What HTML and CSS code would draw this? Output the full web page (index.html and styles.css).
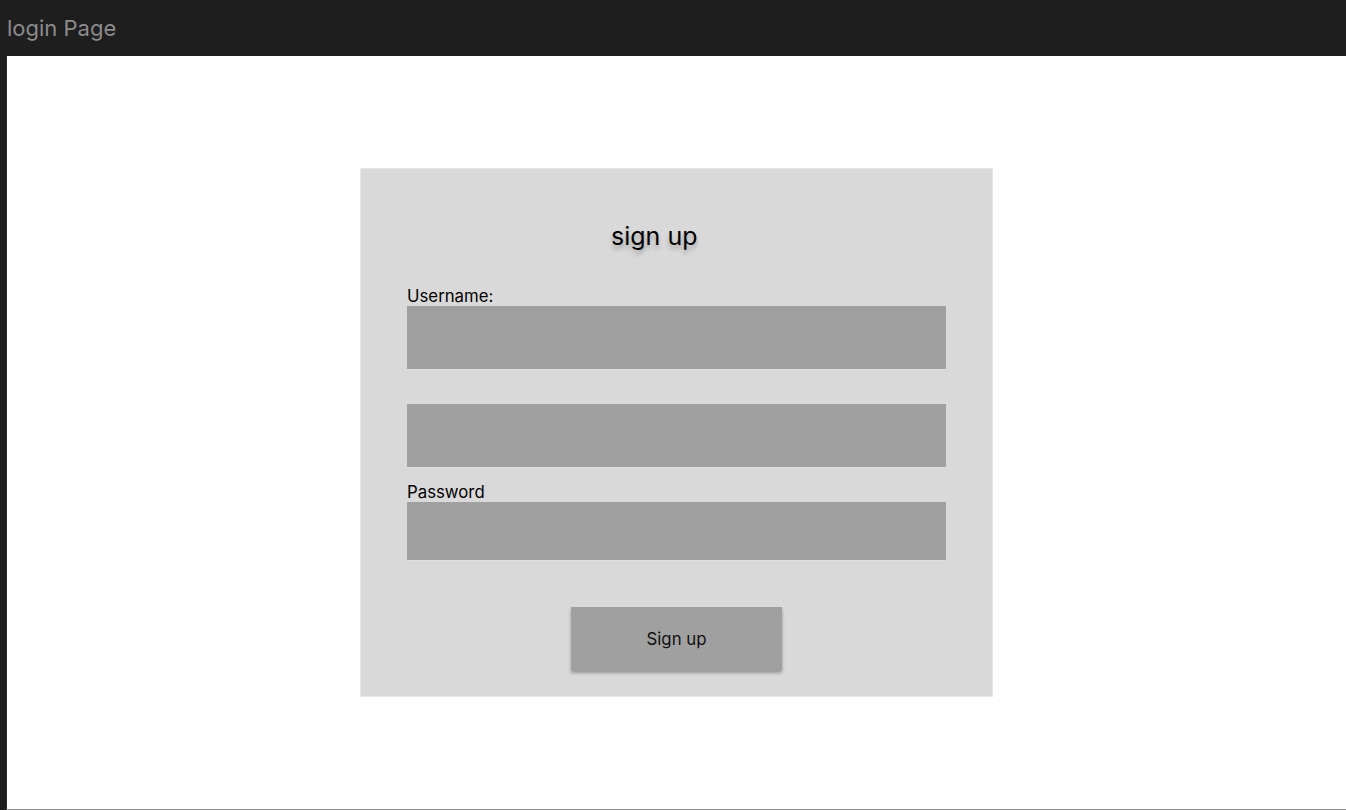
FILE: index.html
```html
<!DOCTYPE html>
<html lang="en">
<head>
<meta charset="utf-8">
<title>login Page</title>
<link rel="stylesheet" href="styles.css">
</head>
<body>
  <header class="topbar">login Page</header>
  <main class="frame">
    <form class="card">
      <h1 class="card-title">sign up</h1>
      <div class="fields">
        <label class="label" for="username">Username:</label>
        <input class="field" id="username" type="text">
        <input class="field field-second" type="text">
        <label class="label label-password" for="password">Password</label>
        <input class="field field-short" id="password" type="password">
      </div>
      <button class="btn" type="button">Sign up</button>
    </form>
  </main>
</body>
</html>
```

FILE: styles.css
```css
* { box-sizing: border-box; }

html, body {
  margin: 0;
  padding: 0;
}

body {
  background: #1e1e1e;
  font-family: Inter, "Noto Sans", sans-serif;
  width: 1346px;
  height: 810px;
  overflow: hidden;
}

.topbar {
  height: 56px;
  padding-left: 7px;
  padding-top: 15px;
  font-size: 22px;
  line-height: 27px;
  color: #8c8c8c;
}

.frame {
  margin-left: 6px;
  border-left: 1px solid #2e2e2e;
  background: #ffffff;
  height: 754px;
  border-bottom: 1px solid #8c8c8c;
  display: flex;
  align-items: center;
  justify-content: center;
}

.card {
  width: 631px;
  height: 527px;
  background: #d9d9d9;
  box-shadow: 0 0 0 1px #e6e6e6;
  margin: 0;
  padding: 52px 46px 26px;
  display: flex;
  flex-direction: column;
  align-items: center;
}

.card-title {
  align-self: flex-start;
  margin: 0 0 0 204px;
  font-weight: 400;
  font-size: 25px;
  line-height: 30px;
  color: #000;
  text-shadow: 0 4px 4px rgba(0, 0, 0, 0.25);
}

.fields {
  width: 100%;
  display: flex;
  flex-direction: column;
  margin-top: 36px;
}

.label {
  font-size: 16.8px;
  line-height: 19px;
  color: #000;
}

.label-password {
  margin-top: 16px;
}

.field {
  display: block;
  width: 539px;
  height: 63px;
  border: 0;
  margin: 0;
  padding: 0;
  background: #a0a0a0;
  box-shadow: 0 1px 0 #e0e0e0;
}

.field-second {
  margin-top: 35px;
}

.field-short {
  height: 58px;
}

.btn {
  margin-top: 47px;
  width: 211px;
  height: 63px;
  border: 0;
  padding: 0;
  background: #a0a0a0;
  box-shadow: 0 3px 3px rgba(0, 0, 0, 0.3);
  font-family: Inter, "Noto Sans", sans-serif;
  font-size: 16.8px;
  color: #111;
  cursor: pointer;
}
```
